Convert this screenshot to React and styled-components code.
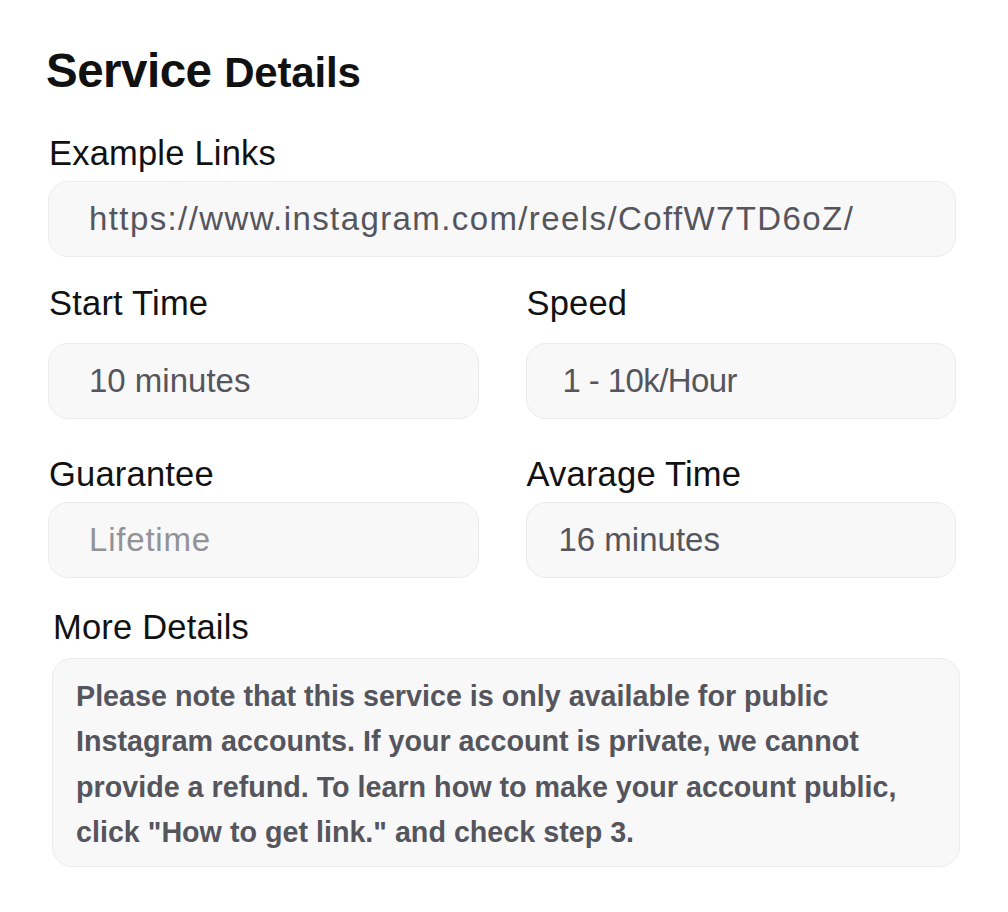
import React from "react";
import styled, { createGlobalStyle } from "styled-components";

const Global = createGlobalStyle`
  html, body { margin: 0; padding: 0; background: #ffffff; }
  body { font-family: "Liberation Sans", Arial, sans-serif; color: #111111; }
`;

const Page = styled.div`
  width: 1008px;
  padding: 42px 52px 40px 48px;
  box-sizing: border-box;
`;

const Title = styled.h1`
  margin: 0 0 0 -2px;
  font-size: 47.5px;
  font-weight: 700;
  letter-spacing: -0.5px;
  line-height: 58px;
  color: #111111;
`;

const TitleSmall = styled.span`
  font-size: 42px;
  letter-spacing: -0.2px;
`;

const Form = styled.div`
  display: flex;
  flex-direction: column;
  margin-top: 33px;
`;

const Row = styled.div`
  display: grid;
  grid-template-columns: ${(p) => (p.$single ? "1fr" : "1fr 1fr")};
  column-gap: 47px;
  margin-top: ${(p) => p.$mt || 0}px;
  margin-left: ${(p) => p.$shift || 0}px;
  margin-right: ${(p) => -(p.$shift || 0)}px;
`;

const Field = styled.div`
  display: flex;
  flex-direction: column;
  gap: ${(p) => p.$gap || 10}px;
`;

const Label = styled.label`
  font-size: 34.5px;
  letter-spacing: 0.2px;
  line-height: 36px;
  color: #111111;
  padding-left: 1px;
`;

const Box = styled.div`
  height: 76px;
  box-sizing: border-box;
  display: flex;
  align-items: center;
  padding-left: ${(p) => p.$pad || 40}px;
  background: #f8f8f8;
  border: 1.5px solid #ebebeb;
  border-radius: 20px;
  font-size: 33px;
  letter-spacing: ${(p) => p.$ls || 0}px;
  color: ${(p) => (p.$muted ? "#929297" : "#55555d")};
  white-space: nowrap;
  overflow: hidden;
`;

const Note = styled.div`
  box-sizing: border-box;
  padding: 15px 8px 11px 23px;
  background: #f8f8f8;
  border: 1.5px solid #ebebeb;
  border-radius: 20px;
  font-size: 28.7px;
  font-weight: 700;
  line-height: 45.3px;
  color: #55555d;
  white-space: nowrap;
`;

export default function App() {
  return (
    <>
      <Global />
      <Page>
        <Title>
          Service <TitleSmall>Details</TitleSmall>
        </Title>
        <Form>
          <Row $single>
            <Field>
              <Label>Example Links</Label>
              <Box $ls={1.4}>https://www.instagram.com/reels/CoffW7TD6oZ/</Box>
            </Field>
          </Row>
          <Row $mt={28}>
            <Field $gap={22}>
              <Label>Start Time</Label>
              <Box>10 minutes</Box>
            </Field>
            <Field $gap={22}>
              <Label>Speed</Label>
              <Box $pad={36} $ls={-0.6}>1 - 10k/Hour</Box>
            </Field>
          </Row>
          <Row $mt={37}>
            <Field>
              <Label>Guarantee</Label>
              <Box $muted $ls={0.8}>Lifetime</Box>
            </Field>
            <Field>
              <Label>Avarage Time</Label>
              <Box $pad={32}>16 minutes</Box>
            </Field>
          </Row>
          <Row $single $mt={31} $shift={4}>
            <Field $gap={13}>
              <Label>More Details</Label>
              <Note>
                Please note that this service is only available for public
                <br />
                Instagram accounts. If your account is private, we cannot
                <br />
                provide a refund. To learn how to make your account public,
                <br />
                click "How to get link." and check step 3.
              </Note>
            </Field>
          </Row>
        </Form>
      </Page>
    </>
  );
}
